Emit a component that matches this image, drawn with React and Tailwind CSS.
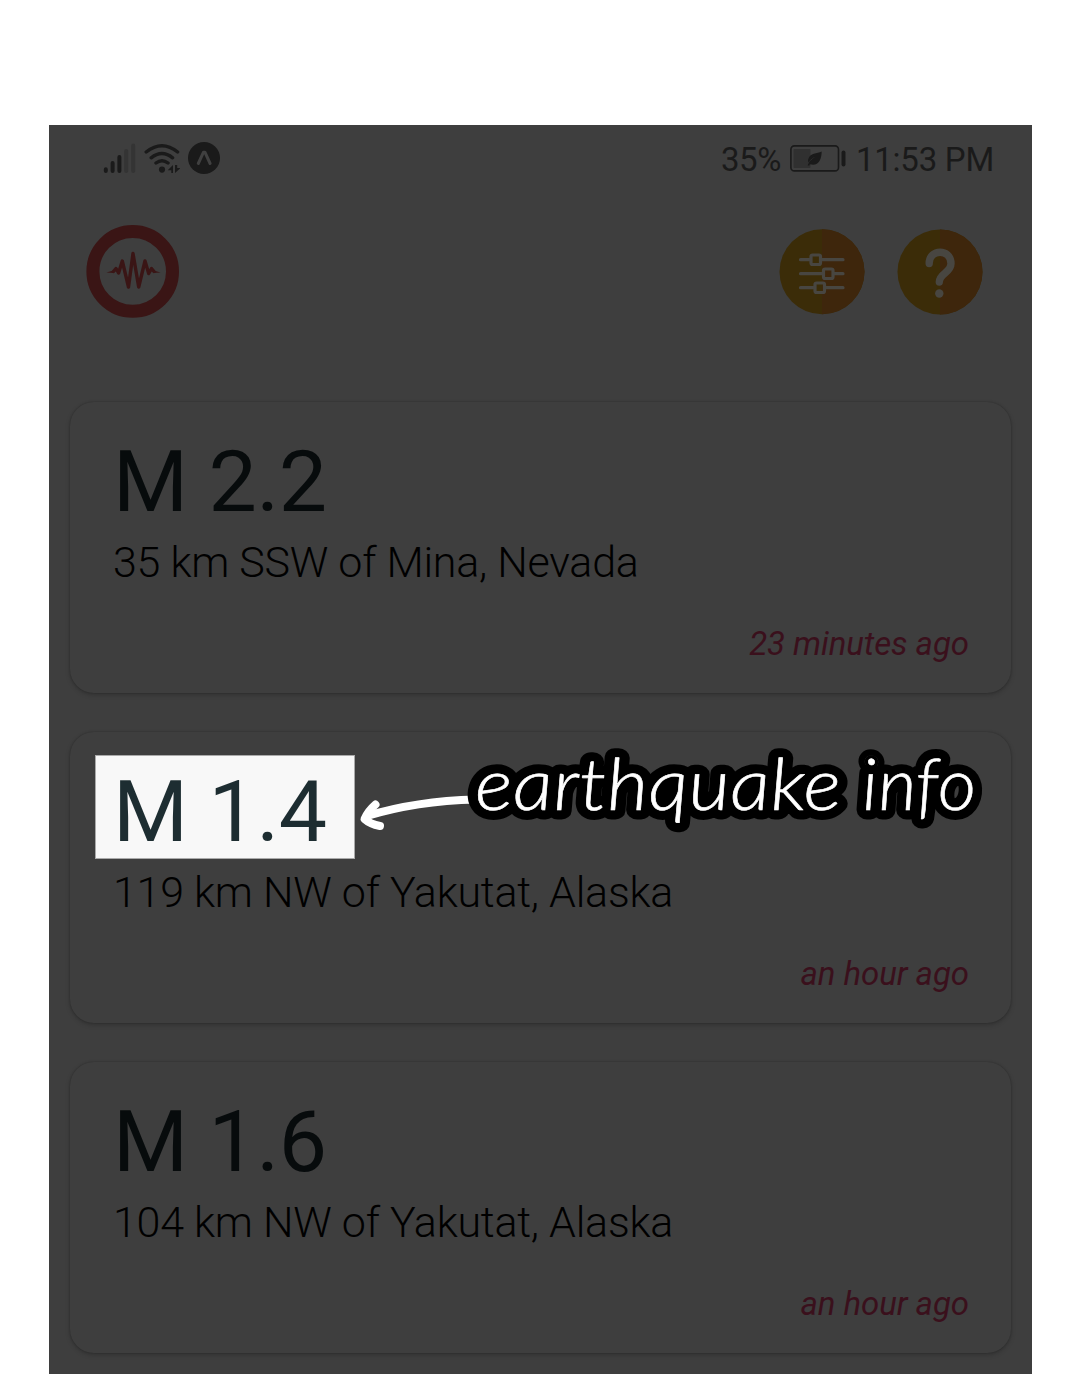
import React from "react";

const quakes = [
  { magnitude: "M 2.2", place: "35 km SSW of Mina, Nevada", time: "23 minutes ago" },
  { magnitude: "M 1.4", place: "119 km NW of Yakutat, Alaska", time: "an hour ago", highlighted: true },
  { magnitude: "M 1.6", place: "104 km NW of Yakutat, Alaska", time: "an hour ago" },
];

function Signal() {
  return (
    <svg className="mb-[5px] ml-[54px] h-[32px] w-[33px]" viewBox="0 0 33 32" fill="none" strokeWidth="4" strokeLinecap="round">
      <path d="M2.8 28.2V30M9.6 22v8M16.4 16v14" stroke="#1a1a1a" />
      <path d="M23.2 10v20M30.2 4.5V30" stroke="#343434" />
    </svg>
  );
}

function Wifi() {
  return (
    <svg className="mb-[5px] ml-[8px] h-[32px] w-[36px]" viewBox="0 0 36 32" fill="none" stroke="#1a1a1a" strokeWidth="3.4" strokeLinecap="round">
      <path d="M2.2 11Q18 -1.6 33.6 11M7.2 16.8Q18 8.4 28.6 16.8M12 22Q18 17.4 24 22" />
      <circle cx="18" cy="28.6" r="3.1" fill="#1a1a1a" stroke="none" />
      <path d="M29 24v8h-1.700v-2.800h-3.600zM31 24v8l5.500-5h-3.300v-3z" fill="#1a1a1a" stroke="none" />
    </svg>
  );
}

function StatusBar() {
  return (
    <div className="flex h-[68px] items-center text-[33px] text-[#1a1a1a]">
      <Signal />
      <Wifi />
      <svg className="mb-[2px] ml-[8px] h-[32px] w-[32px]" viewBox="0 0 32 32">
        <circle cx="16" cy="16" r="16" fill="#1a1a1a" />
        <path d="M10.300 21.500L15.500 10.200h1.400L22.100 21.500" fill="none" stroke="#404040" strokeWidth="3" strokeLinecap="round" strokeLinejoin="round" />
      </svg>
      <div className="mr-[38px] ml-auto flex items-center">
        <span className="mt-[2px] tracking-[-0.4px]">35%</span>
        <svg className="mr-[10px] mb-[2px] ml-[9px] h-[27px] w-[56px]" viewBox="0 0 56 27">
          <rect x="0.9" y="0.9" width="47.6" height="25" rx="3.5" fill="none" stroke="#1a1a1a" strokeWidth="1.6" />
          <rect x="3.5" y="4" width="17" height="19" rx="1" fill="#303030" />
          <path d="M31.7 6.500C27 8.500 20 8 18.300 14c-.5 1.600-.2 2.600.2 3.600 2-3 4.300-4.800 6.700-5.800-3.200 2.100-6.200 4.700-7.500 8.500l1.400.4.8-1.500C28 21.500 31.500 15.500 31.700 6.500z" fill="#1a1a1a" />
          <rect x="51.500" y="5.500" width="4" height="16" rx="2" fill="#1a1a1a" />
        </svg>
        <span className="mt-[2px] tracking-[-0.25px]">11:53 PM</span>
      </div>
    </div>
  );
}

function Header() {
  return (
    <div className="flex h-[156px] items-center px-[37px]">
      <svg className="h-[94px] w-[94px]" viewBox="0 0 94 94" fill="none">
        <circle cx="46.700" cy="47.400" r="39.800" stroke="#3a1515" strokeWidth="13" />
        <path d="M27.500 47.500L30 44.500l2.600 4.500L36.300 37l6.200 26L47 29.500 52.700 63 59 37l3.700 12.500L65.500 44.500l2.500 3" stroke="#3a1515" strokeWidth="3.400" strokeLinecap="round" strokeLinejoin="round" />
        <path d="M20.500 48.500l7.500-2.200v2.700zM74.500 48.500L67 46.200v2.800z" fill="#3a1515" />
      </svg>
      <svg className="mt-[1px] ml-auto h-[86px] w-[86px]" viewBox="0 0 86 86">
        <circle cx="43" cy="42.700" r="42.500" fill="#3b2c08" />
        <path d="M43 .2a42.500 42.500 0 010 85z" fill="#3e260c" />
        <g stroke="#484641" strokeWidth="3.200" strokeLinecap="round" fill="none">
          <path d="M21.500 30.700h10M42 30.700h22M21.500 44.700h23M55 44.700h9M21.500 58.700h14M46 58.700h18" />
          <rect x="32" y="26" width="9.500" height="9.500" rx="1.500" />
          <rect x="44.500" y="40" width="9.500" height="9.500" rx="1.500" />
          <rect x="36" y="54" width="9.500" height="9.500" rx="1.500" />
        </g>
      </svg>
      <svg className="mt-[1px] mr-[12.5px] ml-[32px] h-[86px] w-[86px]" viewBox="0 0 86 86">
        <circle cx="43" cy="43" r="42.500" fill="#3b2c08" />
        <path d="M43 .5a42.500 42.500 0 010 85z" fill="#3e260c" />
        <path d="M32.200 34.500C32 19.500 54 19.500 54 34.500c0 9.500-11.700 9.500-11.700 18.500" fill="none" stroke="#484641" strokeWidth="7.400" strokeLinecap="round" />
        <circle cx="42.300" cy="64.500" r="4.200" fill="#484641" />
      </svg>
    </div>
  );
}

function CalloutWords(props) {
  return (
    <g {...props}>
      <text x="18" y="78.500" textLength="366" lengthAdjust="spacingAndGlyphs" transform="translate(4 0) skewX(3)">earthquake</text>
      <text x="405" y="78.500" textLength="114" lengthAdjust="spacingAndGlyphs" transform="translate(4 0) skewX(3)">info</text>
    </g>
  );
}

function Callout() {
  return (
    <>
      <svg className="absolute top-[55px] left-[286px] h-[48px] w-[120px]" viewBox="0 0 120 48" fill="none" stroke="#fff" strokeLinecap="round" strokeLinejoin="round">
        <path d="M120 12.500Q60 14 11 29" strokeWidth="8" />
        <path d="M19.500 17.500Q12 24 8.500 32Q14 37 24 39" strokeWidth="8" />
      </svg>
      <svg
        className="absolute top-0 left-[380px] h-[120px] w-[550px] overflow-visible font-['Lato'] text-[72px] font-light italic"
        viewBox="0 0 550 120"
        strokeLinejoin="round"
        strokeLinecap="round"
      >
        <CalloutWords fill="#000" stroke="#000" strokeWidth="19" />
        <CalloutWords fill="#000" stroke="#000" strokeWidth="7" />
        <CalloutWords fill="#fff" stroke="#fff" strokeWidth="0.6" />
      </svg>
    </>
  );
}

function QuakeCard({ quake }) {
  return (
    <section className="relative h-[291px] rounded-[24px] bg-[#3e3e3e] px-[43px] pt-[30px] shadow-[0_2px_5px_rgba(0,0,0,0.2),0_0_2px_rgba(0,0,0,0.25)]">
      {quake.highlighted && (
        <div className="absolute top-[23px] left-[25px] h-[104px] w-[260px] border border-[#aaa] bg-[#f8f8f8]" />
      )}
      <h2 className={quake.highlighted ? "relative text-[86px] leading-[99px] tracking-[-0.4px] text-[#1d2d31]" : "text-[86px] leading-[99px] tracking-[-0.4px] text-[#070b0c]"}>
        {quake.magnitude}
      </h2>
      <p className="mt-[6px] text-[43px] leading-[50px] font-light tracking-[-0.25px] text-black">{quake.place}</p>
      <p className="mt-[37px] mr-[-1px] text-right text-[33px] leading-[40px] tracking-[-0.08px] text-[#3a101c] italic">{quake.time}</p>
      {quake.highlighted && <Callout />}
    </section>
  );
}

export default function App() {
  return (
    <div className="h-[1374px] overflow-hidden bg-white pt-[125px]">
      <main className="ml-[49px] h-[1249px] w-[983px] bg-[#3e3e3e] font-['Roboto',sans-serif]">
        <StatusBar />
        <Header />
        <div className="mt-[53px] mr-[21px] ml-[21px] flex flex-col gap-[39px]">
          {quakes.map((q) => (
            <QuakeCard key={q.magnitude} quake={q} />
          ))}
        </div>
      </main>
    </div>
  );
}
